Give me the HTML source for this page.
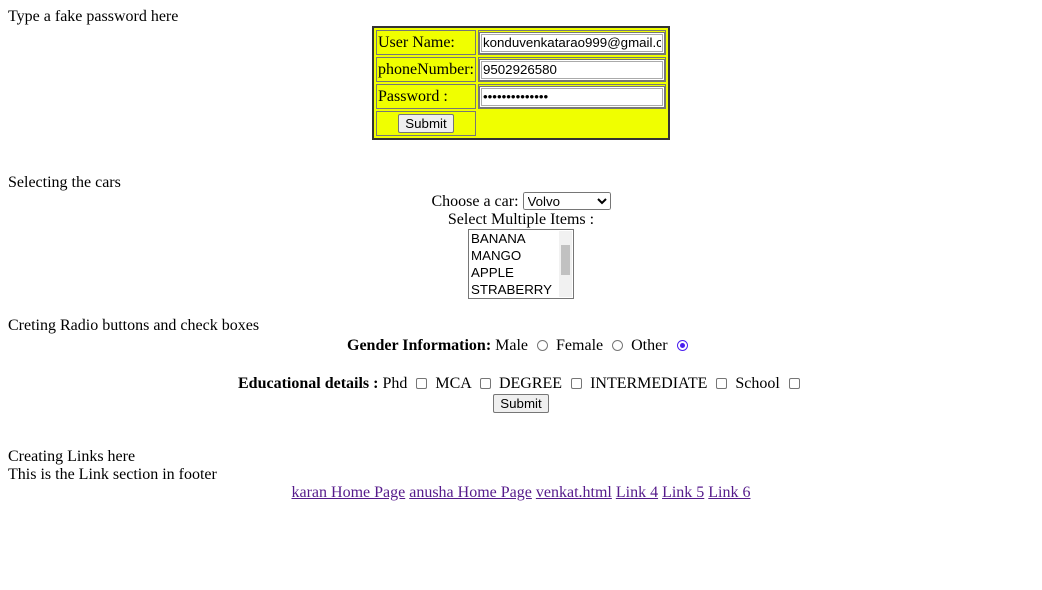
<!DOCTYPE html>
<html><head><style>
body{margin:0;font-family:"Liberation Serif",serif;font-size:16px;color:#000;background:#fff;width:1042px;height:590px;position:relative;overflow:hidden}
.a{position:absolute;white-space:nowrap;line-height:18px}
.c{left:0;width:1042px;text-align:center}
table{position:absolute;left:372px;top:26px;background:#f0ff00;border:2px solid #333;border-spacing:2px;border-collapse:separate}
td{border:1px solid #777;padding:0 1px;height:23px;font-size:16px}
input[type=text],input[type=password]{font-family:"Liberation Sans",sans-serif;font-size:13.3px;border:1px solid #767676;outline:1px solid #aaa;outline-offset:-3px;padding:1px 3px;margin:0;box-sizing:border-box;width:186px;height:22px;display:block}
button{font-family:"Liberation Sans",sans-serif;font-size:13.3px;background:#efefef;border:1px solid #767676;border-radius:2px;padding:1px 6px}
select{font-family:"Liberation Sans",sans-serif;font-size:13.3px}
a{color:#551a8b}
.rb{display:inline-block;width:11px;height:11px;border:1px solid #767676;border-radius:50%;vertical-align:-1px;margin:0 4px 0 5px;box-sizing:border-box;position:relative}
.rb.on{border:1px solid #4a1ff0}
.rb.on:after{content:"";position:absolute;left:2px;top:2px;width:5px;height:5px;border-radius:50%;background:#4a1ff0}
.cb{display:inline-block;width:11px;height:11px;border:1px solid #767676;border-radius:2px;vertical-align:-1px;margin:0 4px 0 5px;box-sizing:border-box}
.lb{position:absolute;left:468px;top:229px;width:106px;height:70px;border:1px solid #767676;box-sizing:border-box;font-family:"Liberation Sans",sans-serif;font-size:13.3px;line-height:17px;padding-left:2px}
.sb{position:absolute;right:1px;top:1px;width:13px;height:66px;background:#f1f1f1}
.th{position:absolute;left:2px;top:14px;width:9px;height:30px;background:#c1c1c1}
</style></head><body>
<div class="a" style="left:8px;top:8px">Type a fake password here</div>
<table>
<tr><td>User Name:</td><td style="padding:0"><input type="text" value="konduvenkatarao999@gmail.com"></td></tr>
<tr><td>phoneNumber:</td><td style="padding:0"><input type="text" value="9502926580"></td></tr>
<tr><td>Password :</td><td style="padding:0"><input type="password" value="abcdefghijklmn"></td></tr>
<tr><td style="text-align:center"><button>Submit</button></td><td style="border:none"></td></tr>
</table>
<div class="a" style="left:8px;top:174px">Selecting the cars</div>
<div class="a c" style="top:192px">Choose a car: <select style="width:88px;height:18px"><option>Volvo</option></select></div>
<div class="a c" style="top:211px">Select Multiple Items :</div>
<div class="lb">BANANA<br>MANGO<br>APPLE<br>STRABERRY<div class="sb"><div class="th"></div></div></div>
<div class="a" style="left:8px;top:317px">Creting Radio buttons and check boxes</div>
<div class="a" style="left:347px;top:337px"><b>Gender Information:</b> Male <span class="rb"></span> Female <span class="rb"></span> Other <span class="rb on"></span></div>
<div class="a" style="left:238px;top:375px"><b>Educational details :</b> Phd <span class="cb"></span> MCA <span class="cb"></span> DEGREE <span class="cb"></span> INTERMEDIATE <span class="cb"></span> School <span class="cb"></span></div>
<div class="a c" style="top:394px"><button>Submit</button></div>
<div class="a" style="left:8px;top:448px">Creating Links here</div>
<div class="a" style="left:8px;top:466px">This is the Link section in footer</div>
<div class="a c" style="top:484px"><a href="#">karan Home Page</a> <a href="#">anusha Home Page</a> <a href="#">venkat.html</a> <a href="#">Link 4</a> <a href="#">Link 5</a> <a href="#">Link 6</a></div>
</body></html>
